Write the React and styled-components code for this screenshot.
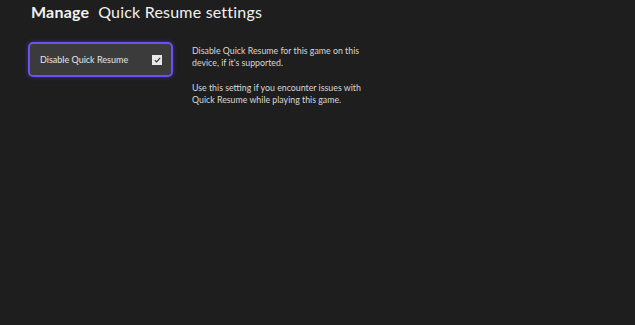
import React, { useState } from 'react';
import styled, { createGlobalStyle } from 'styled-components';

const Global = createGlobalStyle`
    html, body {
        margin: 0;
        padding: 0;
        background: #1e1e1e;
    }
    body {
        font-family: Lato, "Open Sans", sans-serif;
        color: #ffffff;
    }
`;

const Page = styled.div`
    width: 635px;
    height: 325px;
    background: #1e1e1e;
    padding: 0 0 0 31px;
    box-sizing: border-box;
`;

const Header = styled.h1`
    margin: 0;
    height: 22px;
    display: flex;
    align-items: center;
    gap: 9px;
    font-size: 16px;
    font-weight: 400;
    color: #f2f2f2;
    letter-spacing: 0.2px;
`;

const Section = styled.span`
    font-weight: 700;
`;

const Body = styled.div`
    display: flex;
    margin-top: 20px;
    margin-left: -3px;
    gap: 19px;
`;

const Option = styled.button`
    width: 145px;
    height: 35px;
    box-sizing: border-box;
    display: flex;
    align-items: center;
    justify-content: space-between;
    padding: 0 9px 0 10px;
    background: #3b3b3b;
    border: 2px solid #6b50f2;
    border-radius: 5px;
    box-shadow: 0 0 5px rgba(107, 80, 242, 0.45);
    font-family: inherit;
    font-size: 9px;
    color: #e6e6e6;
    cursor: pointer;
`;

const Check = styled.span`
    width: 10px;
    height: 10px;
    background: ${p => (p.checked ? '#e8e8e8' : 'transparent')};
    border: 1px solid #e8e8e8;
    box-sizing: border-box;
    display: flex;
    align-items: center;
    justify-content: center;
`;

const Info = styled.div`
    width: 172px;
    padding-top: 3px;
    font-size: 8.8px;
    line-height: 12px;
    color: #d8d8d8;
`;

const Para = styled.p`
    margin: 0 0 13px;
`;

export default function App() {
    const [checked, setChecked] = useState(true);
    return (
        <>
            <Global />
            <Page>
                <Header>
                    <Section>Manage</Section>
                    <span>Quick Resume settings</span>
                </Header>
                <Body>
                    <Option onClick={() => setChecked(!checked)}>
                        Disable Quick Resume
                        <Check checked={checked}>
                            {checked && (
                                <svg width="7" height="6" viewBox="0 0 7 6">
                                    <path d="M0.8 3.2 L2.6 4.9 L6.2 0.9" fill="none" stroke="#2a2a2a" strokeWidth="1.1" />
                                </svg>
                            )}
                        </Check>
                    </Option>
                    <Info>
                        <Para>Disable Quick Resume for this game on this device, if it's supported.</Para>
                        <Para>Use this setting if you encounter issues with Quick Resume while playing this game.</Para>
                    </Info>
                </Body>
            </Page>
        </>
    );
}
